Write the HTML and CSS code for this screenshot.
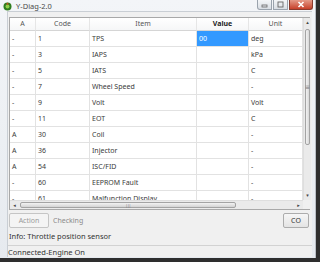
FILE: index.html
```html
<!DOCTYPE html>
<html lang="en">
<head>
    <meta charset="UTF-8">
    <title>Y-Diag-2.0</title>
    <link rel="stylesheet" href="styles.css">
</head>
<body>
    <div class="window">
        <div class="titlebar">
            <span class="app-icon">
                <svg width="9" height="9" viewBox="0 0 9 9">
                    <circle cx="4.5" cy="4.5" r="4" fill="#2f7d1f"/>
                    <circle cx="4.5" cy="4.5" r="2" fill="#8fd04a"/>
                    <path d="M4.5 0.5 L6 2.5 L3 2.5 Z" fill="#c84a1a"/>
                </svg>
            </span>
            <span class="title">Y-Diag-2.0</span>
            <div class="controls">
                <span class="ctl">
                    <svg width="13" height="9" viewBox="0 0 13 9"><rect x="4" y="5" width="5" height="2" fill="none" stroke="#666" stroke-width="0.8"/></svg>
                </span>
                <span class="ctl">
                    <svg width="13" height="9" viewBox="0 0 13 9"><rect x="4" y="2" width="5" height="5" fill="none" stroke="#666" stroke-width="0.9"/></svg>
                </span>
                <span class="ctl close">
                    <svg width="22" height="9" viewBox="0 0 22 9"><path d="M8.5 2 L13.5 7 M13.5 2 L8.5 7" stroke="#fff" stroke-width="1.6"/></svg>
                </span>
            </div>
        </div>

        <div class="client">
            <div class="grid-box">
                <div class="table-view">
                    <div class="row head">
                        <div class="cell">A</div>
                        <div class="cell">Code</div>
                        <div class="cell">Item</div>
                        <div class="cell bold">Value</div>
                        <div class="cell">Unit</div>
                    </div>
                    <div class="row">
                        <div class="cell">-</div><div class="cell">1</div><div class="cell">TPS</div><div class="cell selected">00</div><div class="cell">deg</div>
                    </div>
                    <div class="row">
                        <div class="cell">-</div><div class="cell">3</div><div class="cell">IAPS</div><div class="cell"></div><div class="cell">kPa</div>
                    </div>
                    <div class="row">
                        <div class="cell">-</div><div class="cell">5</div><div class="cell">IATS</div><div class="cell"></div><div class="cell">C</div>
                    </div>
                    <div class="row">
                        <div class="cell">-</div><div class="cell">7</div><div class="cell">Wheel Speed</div><div class="cell"></div><div class="cell">-</div>
                    </div>
                    <div class="row">
                        <div class="cell">-</div><div class="cell">9</div><div class="cell">Volt</div><div class="cell"></div><div class="cell">Volt</div>
                    </div>
                    <div class="row">
                        <div class="cell">-</div><div class="cell">11</div><div class="cell">EOT</div><div class="cell"></div><div class="cell">C</div>
                    </div>
                    <div class="row">
                        <div class="cell">A</div><div class="cell">30</div><div class="cell">Coil</div><div class="cell"></div><div class="cell">-</div>
                    </div>
                    <div class="row">
                        <div class="cell">A</div><div class="cell">36</div><div class="cell">Injector</div><div class="cell"></div><div class="cell">-</div>
                    </div>
                    <div class="row">
                        <div class="cell">A</div><div class="cell">54</div><div class="cell">ISC/FID</div><div class="cell"></div><div class="cell">-</div>
                    </div>
                    <div class="row">
                        <div class="cell">-</div><div class="cell">60</div><div class="cell">EEPROM Fault</div><div class="cell"></div><div class="cell">-</div>
                    </div>
                    <div class="row">
                        <div class="cell">-</div><div class="cell">61</div><div class="cell">Malfunction Display</div><div class="cell"></div><div class="cell">-</div>
                    </div>
                </div>

                <div class="vscroll">
                    <div class="arrow">&#9652;</div>
                    <div class="track">
                        <div class="thumb-v"><span class="grip">&#8801;</span></div>
                    </div>
                    <div class="arrow">&#9662;</div>
                </div>

                <div class="hscroll">
                    <div class="arrow">&#9666;</div>
                    <div class="track-h">
                        <div class="thumb-h"><span class="grip-h">|||</span></div>
                    </div>
                    <div class="arrow">&#9656;</div>
                </div>
                <div class="corner"></div>
            </div>

            <div class="actions">
                <button class="btn" disabled>Action</button>
                <span class="checking">Checking</span>
                <button class="btn co">CO</button>
            </div>
            <div class="info">Info: Throttle position sensor</div>
            <div class="status">Connected-Engine On</div>
        </div>
    </div>
</body>
</html>
```

FILE: styles.css
```css
body {
    margin: 0;
    padding: 0;
    background-color: #2e2e2e;
    font-family: "Noto Sans", "DejaVu Sans", sans-serif;
    font-size: 7px;
    color: #333;
}

.window {
    width: 316px;
    height: 258px;
    background: linear-gradient(#f3f5f8, #e6eaef);
    border-right: 1px solid #b9bec5;
    box-sizing: border-box;
    display: flex;
    flex-direction: column;
}

.titlebar {
    height: 13px;
    display: flex;
    align-items: flex-start;
    padding-left: 3px;
}

.app-icon {
    margin-top: 2px;
    width: 9px;
    height: 9px;
}

.title {
    margin-left: 4px;
    margin-top: 1px;
    font-size: 7.5px;
    color: #4a4a4a;
}

.controls {
    margin-left: auto;
    margin-right: 2px;
    display: flex;
    gap: 1px;
}

.ctl {
    height: 9px;
    display: flex;
    border: 1px solid #9aa3ad;
    border-top: none;
    background: linear-gradient(#f4f6f8, #d9dee4);
}

.ctl:first-child {
    border-radius: 0 0 0 3px;
}

.ctl.close {
    background: linear-gradient(#e49a88, #c7412a);
    border-color: #8a3b2e;
    border-radius: 0 0 3px 0;
}

.client {
    flex: 1;
    margin: 0 3px 3px 7px;
    background-color: #f0f0f0;
    border-left: 1px solid #c9ced4;
    border-top: 1px solid #c9ced4;
    display: flex;
    flex-direction: column;
    padding: 5px 0 0 1px;
}

.grid-box {
    width: 301px;
    display: grid;
    grid-template-columns: 293px 8px;
    grid-template-rows: 182px 9px;
    border: 1px solid #a8a8a8;
    box-sizing: border-box;
    background-color: #fff;
}

.table-view {
    overflow: hidden;
    background-color: #fff;
}

.row {
    display: grid;
    grid-template-columns: 26px 54px 107px 52px 54px;
    height: 16px;
}

.cell {
    border-right: 1px solid #e2e2e2;
    border-bottom: 1px solid #e2e2e2;
    padding-left: 2px;
    line-height: 15px;
    white-space: nowrap;
    overflow: hidden;
    color: #3a3a3a;
}

.row.head {
    height: 13px;
    background: linear-gradient(#ffffff, #f5f6f7);
}

.row.head .cell {
    line-height: 12px;
    text-align: center;
    padding-left: 0;
    border-bottom: 1px solid #d5d5d5;
    border-right: 1px solid #e6e6e6;
    color: #555;
}

.row.head .cell.bold {
    font-weight: bold;
    color: #222;
}

.cell.selected {
    background-color: #3399ff;
    color: #fff;
}

.vscroll {
    background-color: #eaeaea;
    border-left: 1px solid #dedede;
    display: flex;
    flex-direction: column;
}

.arrow {
    font-size: 5px;
    line-height: 9px;
    height: 9px;
    text-align: center;
    color: #444;
}

.track {
    flex: 1;
    padding-top: 2px;
}

.thumb-v {
    margin: 0 1px;
    height: 114px;
    border: 1px solid #a3a3a3;
    border-radius: 2px;
    background: linear-gradient(90deg, #f2f2f2, #d8d8d8);
    display: flex;
    align-items: center;
    justify-content: center;
}

.grip {
    font-size: 6px;
    color: #777;
}

.hscroll {
    background-color: #eaeaea;
    border-top: 1px solid #dedede;
    display: flex;
}

.hscroll .arrow {
    width: 9px;
    line-height: 8px;
}

.track-h {
    flex: 1;
    padding: 1px 0 1px 1px;
}

.thumb-h {
    width: 216px;
    height: 100%;
    box-sizing: border-box;
    border: 1px solid #a3a3a3;
    border-radius: 2px;
    background: linear-gradient(#f2f2f2, #d3d3d3);
    display: flex;
    align-items: center;
    justify-content: center;
}

.grip-h {
    font-size: 4px;
    color: #777;
    letter-spacing: -0.5px;
}

.corner {
    background-color: #f0f0f0;
}

.actions {
    margin-top: 3px;
    display: flex;
    align-items: center;
    width: 301px;
}

.btn {
    height: 15px;
    font-family: inherit;
    font-size: 7px;
    border: 1px solid #acacac;
    border-radius: 2px;
    background: linear-gradient(#f6f6f6, #e4e4e4);
    color: #333;
    padding: 0;
}

.btn:disabled {
    width: 40px;
    border-color: #c5c5c5;
    background: #f4f4f4;
    color: #9a9a9a;
}

.checking {
    margin-left: 4px;
    color: #8a8a8a;
}

.btn.co {
    width: 26px;
    margin-left: auto;
    margin-right: 1px;
}

.info {
    margin-top: 3px;
    height: 11px;
    line-height: 11px;
    color: #333;
    font-size: 7.5px;
}

.status {
    margin-top: 3px;
    margin-left: -1px;
    border-top: 1px solid #d2d2d2;
    height: 11px;
    line-height: 12px;
    font-size: 7.5px;
    color: #333;
}
```
